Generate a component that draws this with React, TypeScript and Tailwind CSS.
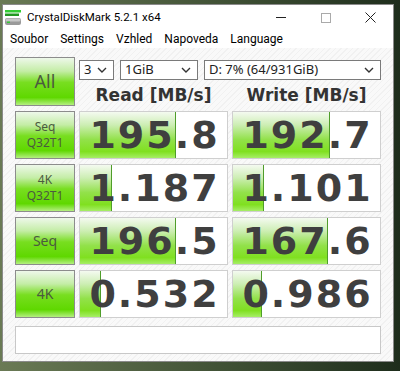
import React from 'react';

interface Row {
  top: string;
  bottom?: string;
  read: string;
  readBar: number;
  write: string;
  writeBar: number;
}

const rows: Row[] = [
  { top: 'Seq', bottom: 'Q32T1', read: '195.8', readBar: 96, write: '192.7', writeBar: 97 },
  { top: '4K', bottom: 'Q32T1', read: '1.187', readBar: 32, write: '1.101', writeBar: 31 },
  { top: 'Seq', read: '196.5', readBar: 96, write: '167.6', writeBar: 95 },
  { top: '4K', read: '0.532', readBar: 21, write: '0.986', writeBar: 29 },
];

const ui = { fontFamily: '"Noto Sans", sans-serif' };
const chrome = { fontFamily: 'Roboto, "Noto Sans", sans-serif' };
const big = { fontFamily: '"DejaVu Sans", sans-serif' };

const greenBtn =
  'bg-[linear-gradient(to_bottom,#eef8ea_0%,#c4eda6_28%,#78de20_52%,#5fd800_84%,#b4ef80_100%)] border border-[#8c8c8c] text-[#4b5b3f]';

function Chevron() {
  return (
    <svg width="10" height="6" viewBox="0 0 10 6" className="shrink-0">
      <path d="M1 1 L5 5 L9 1" fill="none" stroke="#333" strokeWidth="1.4" />
    </svg>
  );
}

function Select({ label, w }: { label: string; w: string }) {
  return (
    <div className={`${w} h-[20px] bg-white border border-[#7a7a7a] flex items-center justify-between pl-[4px] pr-[6px] text-[13px] text-[#222]`}>
      <span>{label}</span>
      <Chevron />
    </div>
  );
}

function ValueBox({ value, bar }: { value: string; bar: number }) {
  return (
    <div className="relative h-[48px] bg-white border border-[#cfcfcf] overflow-hidden flex items-center justify-center">
      <div
        className="absolute left-0 top-0 bottom-0 border-r border-[#4f9d2a] bg-[linear-gradient(to_bottom,#f4faf0_0%,#cdeeb4_28%,#92e14a_60%,#80e020_86%,#a6ee66_100%)]"
        style={{ width: bar }}
      />
      <span
        className="relative text-[38px] font-bold leading-none tracking-[2px] text-[#3f3f3f] pl-[2px]"
        style={big}
      >
        {value}
      </span>
    </div>
  );
}

export default function App() {
  return (
    <div className="w-[400px] h-[371px] bg-[linear-gradient(to_right,#6a7a55,#3d4e33_60%,#1e2d1c)] pt-[4px] pl-[2px]" style={ui}>
      <div className="w-[392px] h-[358px] border border-[#8a8a8a] bg-white flex flex-col">
        {/* title bar */}
        <div className="h-[25px] flex items-center pl-[2px] shrink-0" style={chrome}>
          <svg width="18" height="18" viewBox="0 0 18 18">
            <rect x="0" y="1" width="16" height="2.5" fill="#33cc33" />
            <rect x="0" y="4.5" width="14" height="2.5" fill="#229922" />
            <rect x="0" y="9" width="16" height="7" rx="2" fill="#9a9a9a" />
            <rect x="0.5" y="9.5" width="15" height="3" rx="1.5" fill="#c8c8c8" />
            <rect x="2" y="12.5" width="3" height="1.5" fill="#33cc33" />
          </svg>
          <span className="ml-[4px] text-[11.5px] text-black">CrystalDiskMark 5.2.1 x64</span>
          <div className="ml-auto flex items-center h-full">
            <div className="w-[45px] h-full flex items-center justify-center">
              <div className="w-[10px] h-px bg-[#222]" />
            </div>
            <div className="w-[45px] h-full flex items-center justify-center">
              <div className="w-[10px] h-[10px] border border-[#aaa]" />
            </div>
            <div className="w-[45px] h-full flex items-center justify-center">
              <svg width="11" height="11" viewBox="0 0 11 11">
                <path d="M0.5 0.5 L10.5 10.5 M10.5 0.5 L0.5 10.5" stroke="#222" strokeWidth="1" />
              </svg>
            </div>
          </div>
        </div>

        {/* menu */}
        <div className="h-[18px] flex items-center pl-[1px] text-[12px] text-black shrink-0" style={chrome}>
          {['Soubor', 'Settings', 'Vzhled', 'Napoveda', 'Language'].map((m) => (
            <span key={m} className="px-[6px]">
              {m}
            </span>
          ))}
        </div>

        {/* client area */}
        <div className="flex-1 pt-[9px] pl-[12px] bg-[repeating-linear-gradient(135deg,#f9f9f9_0px,#f9f9f9_3px,#f1f1f1_3px,#f1f1f1_4px)]">
          <div className="grid grid-cols-[60px_149px_149px] gap-x-[4px] gap-y-[5px]">
            <div className={`${greenBtn} h-[49px] flex items-center justify-center text-[18px]`}>All</div>
            <div className="col-span-2 flex flex-col">
              <div className="flex gap-[6px] mt-[3px]">
                <Select label="3" w="w-[35px]" />
                <Select label="1GiB" w="w-[78px]" />
                <Select label="D: 7% (64/931GiB)" w="flex-1" />
              </div>
              <div className="grid grid-cols-2 gap-x-[4px] mt-[4px]">
                <div className="text-center text-[17px] leading-[22px] font-bold text-[#333]" style={big}>
                  Read [MB/s]
                </div>
                <div className="text-center text-[17px] leading-[22px] font-bold text-[#333]" style={big}>
                  Write [MB/s]
                </div>
              </div>
            </div>

            {rows.map((r, i) => (
              <React.Fragment key={i}>
                <div
                  className={`${greenBtn} h-[48px] flex flex-col items-center justify-center ${r.bottom ? 'text-[12px] leading-[16px]' : 'text-[14px]'}`}
                >
                  <span className="leading-[16px]">{r.top}</span>
                  {r.bottom && <span className="leading-[16px]">{r.bottom}</span>}
                </div>
                <ValueBox value={r.read} bar={r.readBar} />
                <ValueBox value={r.write} bar={r.writeBar} />
              </React.Fragment>
            ))}

            <div className="col-span-3 h-[28px] mt-[3px] bg-white border border-[#c8c8c8]" />
          </div>
        </div>
      </div>
    </div>
  );
}
